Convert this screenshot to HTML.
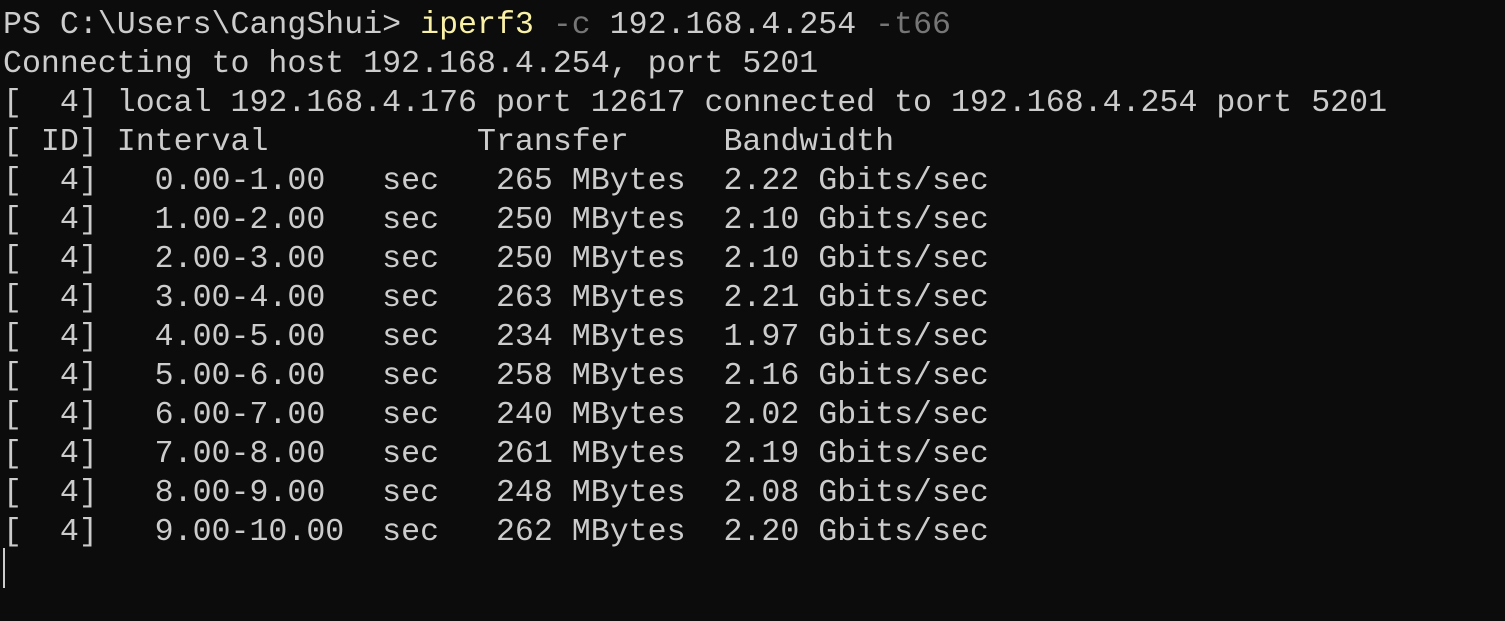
<!DOCTYPE html>
<html><head><style>
html,body{margin:0;padding:0;background:#0c0c0c;width:1505px;height:621px;overflow:hidden}
pre{margin:0;position:absolute;left:3px;top:6px;font-family:"Liberation Mono",monospace;font-size:31.6px;line-height:39px;color:#cccccc;white-space:pre}
.y{color:#f9f1a5}.g{color:#767676}
.cur{position:absolute;left:3px;top:548px;width:2px;height:40px;background:#cccccc}
</style></head><body>
<pre>PS C:\Users\CangShui&gt; <span class="y">iperf3</span> <span class="g">-c</span> 192.168.4.254 <span class="g">-t66</span>
Connecting to host 192.168.4.254, port 5201
[  4] local 192.168.4.176 port 12617 connected to 192.168.4.254 port 5201
[ ID] Interval           Transfer     Bandwidth
[  4]   0.00-1.00   sec   265 MBytes  2.22 Gbits/sec
[  4]   1.00-2.00   sec   250 MBytes  2.10 Gbits/sec
[  4]   2.00-3.00   sec   250 MBytes  2.10 Gbits/sec
[  4]   3.00-4.00   sec   263 MBytes  2.21 Gbits/sec
[  4]   4.00-5.00   sec   234 MBytes  1.97 Gbits/sec
[  4]   5.00-6.00   sec   258 MBytes  2.16 Gbits/sec
[  4]   6.00-7.00   sec   240 MBytes  2.02 Gbits/sec
[  4]   7.00-8.00   sec   261 MBytes  2.19 Gbits/sec
[  4]   8.00-9.00   sec   248 MBytes  2.08 Gbits/sec
[  4]   9.00-10.00  sec   262 MBytes  2.20 Gbits/sec</pre>
<div class="cur"></div>
</body></html>
